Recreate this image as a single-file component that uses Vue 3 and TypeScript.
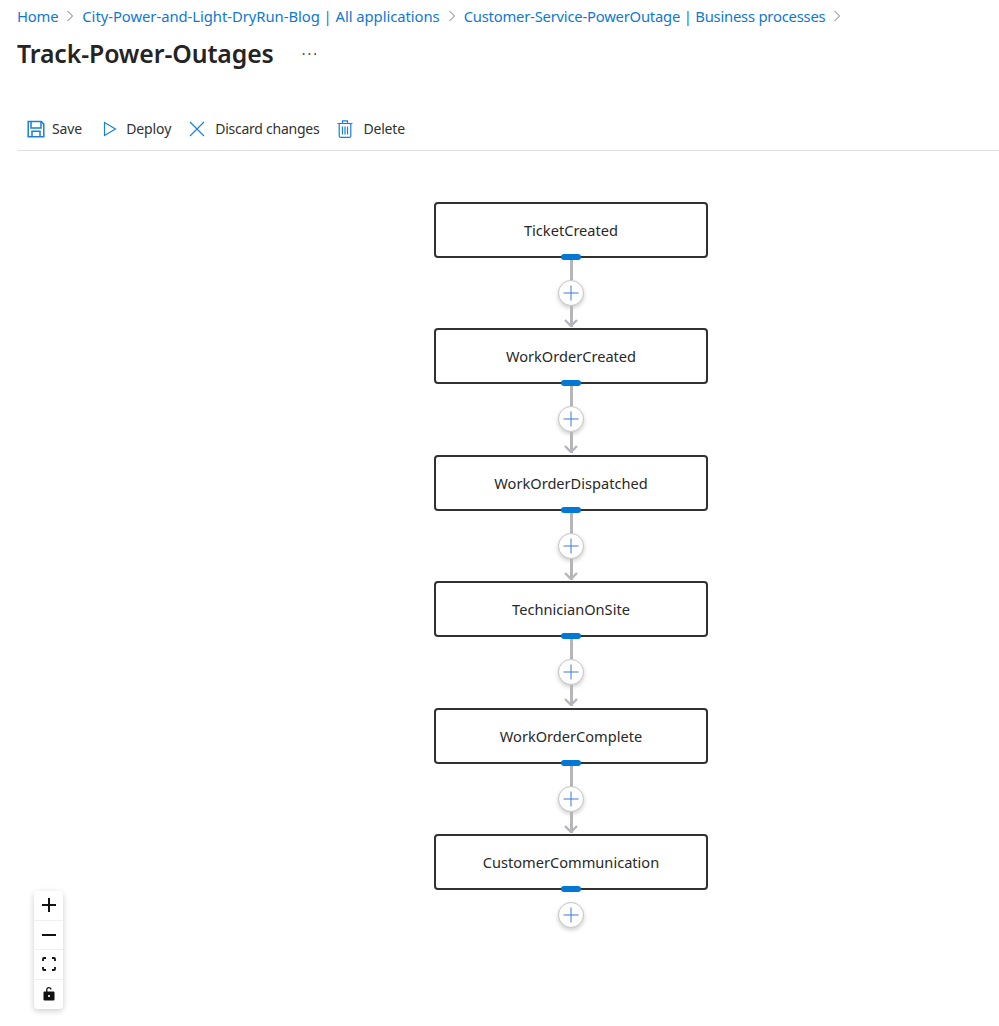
<template>
  <div class="page">
    <nav class="crumbs">
      <template v-for="crumb in crumbs" :key="crumb.label">
        <a class="crumb" :class="crumb.kind">{{ crumb.label }}</a>
        <svg class="chevron" width="8" height="12" viewBox="0 0 8 12"><path d="M1.5 1l5 5-5 5" /></svg>
      </template>
    </nav>

    <header class="title-row">
      <h1>Track-Power-Outages</h1>
      <span class="more">···</span>
    </header>

    <div class="toolbar">
      <button class="tool save">
        <svg width="18" height="18" viewBox="0 0 18 18">
          <path d="M1.2 1.5h13l2.6 2.6v12.7H1.2z" />
          <path d="M4 1.5v6.5h10V1.5M5 16.8v-5.6h8v5.6" />
        </svg>
        <span>Save</span>
      </button>
      <button class="tool deploy">
        <svg width="14" height="16" viewBox="0 0 14 16"><path d="M1.5 1.5v13l11-6.5z" /></svg>
        <span>Deploy</span>
      </button>
      <button class="tool discard">
        <svg width="16" height="16" viewBox="0 0 16 16"><path d="M1 1l14 14M15 1L1 15" /></svg>
        <span>Discard changes</span>
      </button>
      <button class="tool delete">
        <svg width="16" height="18" viewBox="0 0 16 18">
          <path d="M0.5 3.5h15M5.5 3.5v-2.6h5v2.6M2.2 3.5v12.6a1.2 1.2 0 0 0 1.2 1.2h9.2a1.2 1.2 0 0 0 1.2-1.2V3.5M5.5 6.5v8M8 6.5v8M10.5 6.5v8" />
        </svg>
        <span>Delete</span>
      </button>
    </div>

    <main class="canvas">
      <div class="flow">
        <template v-for="(step, i) in steps" :key="step">
          <div class="node">
            {{ step }}
            <span class="port"></span>
          </div>
          <div class="link" :class="{ last: i === steps.length - 1 }">
            <span class="line top"></span>
            <span class="add">
              <svg width="16" height="16" viewBox="0 0 16 16"><path d="M8 0.5v15M0.5 8h15" /></svg>
            </span>
            <template v-if="i < steps.length - 1">
              <span class="line bottom"></span>
              <svg class="arrow" width="14" height="8" viewBox="0 0 14 8"><path d="M1 1l6 6 6-6" /></svg>
            </template>
          </div>
        </template>
      </div>

      <div class="zoom">
        <button>
          <svg width="16" height="16" viewBox="0 0 16 16"><path class="heavy" d="M8 1v14M1 8h14" /></svg>
        </button>
        <button>
          <svg width="16" height="16" viewBox="0 0 16 16"><path class="heavy" d="M1 8h14" /></svg>
        </button>
        <button>
          <svg width="14" height="14" viewBox="0 0 14 14"><path class="frame" d="M1 4V2a1 1 0 0 1 1-1h2M10 1h2a1 1 0 0 1 1 1v2M13 10v2a1 1 0 0 1-1 1h-2M4 13H2a1 1 0 0 1-1-1v-2" /></svg>
        </button>
        <button>
          <svg width="12" height="16" viewBox="0 0 12 16">
            <path class="shackle" d="M3.8 6V3.6C3.8 2.2 5 1.4 6.2 1.7 7.1 1.9 7.9 2.6 8.2 3.4" />
            <path class="body" fill-rule="evenodd" d="M1.5 5.5h9a1 1 0 0 1 1 1v7a1 1 0 0 1-1 1h-9a1 1 0 0 1-1-1v-7a1 1 0 0 1 1-1zM6 8.9a1.1 1.1 0 1 0 0 2.2 1.1 1.1 0 0 0 0-2.2z" />
          </svg>
        </button>
      </div>
    </main>
  </div>
</template>

<script setup lang="ts">
const crumbs: { label: string; kind: string }[] = [
  { label: 'Home', kind: 'home' },
  { label: 'City-Power-and-Light-DryRun-Blog | All applications', kind: 'app' },
  { label: 'Customer-Service-PowerOutage | Business processes', kind: 'process' },
];

const steps: string[] = [
  'TicketCreated',
  'WorkOrderCreated',
  'WorkOrderDispatched',
  'TechnicianOnSite',
  'WorkOrderComplete',
  'CustomerCommunication',
];
</script>

<style>
html,
body {
  margin: 0;
  background: #fff;
}
</style>

<style scoped>
.page {
  position: relative;
  width: 999px;
  height: 1026px;
  overflow: hidden;
  font-family: "Noto Sans", "Open Sans", sans-serif;
  color: #292827;
  background: #fff;
}

.crumbs {
  display: flex;
  align-items: center;
  gap: 8px;
  padding: 6px 0 0 17px;
  height: 20px;
  font-size: 14.8px;
  color: #0f78d4;
}

.crumb.home {
  letter-spacing: -0.2px;
}

.crumb.app {
  letter-spacing: -0.04px;
}

.crumb.process {
  letter-spacing: -0.22px;
}

.chevron path {
  fill: none;
  stroke: #757575;
  stroke-width: 1;
}

.title-row {
  display: flex;
  align-items: center;
  padding: 9px 0 0 17px;
  height: 36px;
}

h1 {
  margin: 0;
  font-size: 24.8px;
  font-weight: 600;
  letter-spacing: -0.1px;
  color: #252423;
}

.more {
  margin-left: 28px;
  font-size: 14px;
  letter-spacing: 2px;
  color: #444;
}

.toolbar {
  display: flex;
  align-items: center;
  margin: 36px 0 0 17px;
  padding-left: 10px;
  height: 43px;
  border-bottom: 1px solid #e0e0e0;
}

.tool {
  display: flex;
  align-items: center;
  gap: 10px;
  margin-right: 18px;
  padding: 0;
  border: 0;
  background: none;
  font: inherit;
  font-size: 14px;
  letter-spacing: -0.1px;
  color: #323130;
}

.tool.save {
  gap: 7px;
  margin-right: 21px;
}

.tool.deploy {
  gap: 9px;
  margin-right: 18px;
}

.tool.discard {
  letter-spacing: -0.25px;
}

.tool.delete {
  letter-spacing: -0.2px;
}

.tool svg path {
  fill: none;
  stroke: #1a80d6;
  stroke-width: 1.2;
}

.tool.save svg path {
  stroke-width: 1.5;
}

.canvas {
  position: relative;
  height: 882px;
}

.flow {
  display: flex;
  flex-direction: column;
  width: 274px;
  padding-top: 51px;
  margin-left: 434px;
}

.node {
  position: relative;
  display: flex;
  align-items: center;
  justify-content: center;
  box-sizing: border-box;
  height: 56px;
  border: 2px solid #323130;
  border-radius: 4px;
  font-size: 14.6px;
  color: #292827;
  background: #fff;
}

.port {
  position: absolute;
  left: 50%;
  bottom: -4px;
  width: 20px;
  height: 6px;
  margin-left: -10px;
  border-radius: 3px;
  background: #0078d4;
}

.link {
  display: flex;
  flex-direction: column;
  align-items: center;
  height: 70.4px;
}

.line {
  width: 3px;
  background: #b6b6ba;
}

.line.top {
  height: 22px;
}

.line.bottom {
  height: 21px;
  margin-bottom: -8px;
}

.link.last .line.top {
  height: 12px;
  background: none;
}

.add {
  display: flex;
  align-items: center;
  justify-content: center;
  box-sizing: border-box;
  width: 26px;
  height: 26px;
  flex: none;
  border: 1px solid #c8c6c4;
  border-radius: 50%;
  background: #fff;
  box-shadow: 0 2px 4px rgba(0, 0, 0, 0.2);
}

.add path {
  fill: none;
  stroke: #3f78d8;
  stroke-width: 1;
}

.arrow path {
  fill: none;
  stroke: #b6b6ba;
  stroke-width: 2.4;
}

.zoom {
  position: absolute;
  left: 34px;
  top: 740px;
  display: flex;
  flex-direction: column;
  width: 29px;
  border-radius: 4px;
  background: #fff;
  box-shadow: 0 2px 6px rgba(0, 0, 0, 0.2);
}

.zoom button {
  display: flex;
  align-items: center;
  justify-content: center;
  height: 29.5px;
  padding: 0;
  border: 0;
  border-bottom: 1px solid #f0f0f0;
  background: none;
}

.zoom button:last-child {
  border-bottom: 0;
}

.heavy {
  fill: none;
  stroke: #111;
  stroke-width: 2;
}

.frame {
  fill: none;
  stroke: #111;
  stroke-width: 1.8;
}

.shackle {
  fill: none;
  stroke: #111;
  stroke-width: 1.3;
}

.body {
  fill: #111;
}
</style>
